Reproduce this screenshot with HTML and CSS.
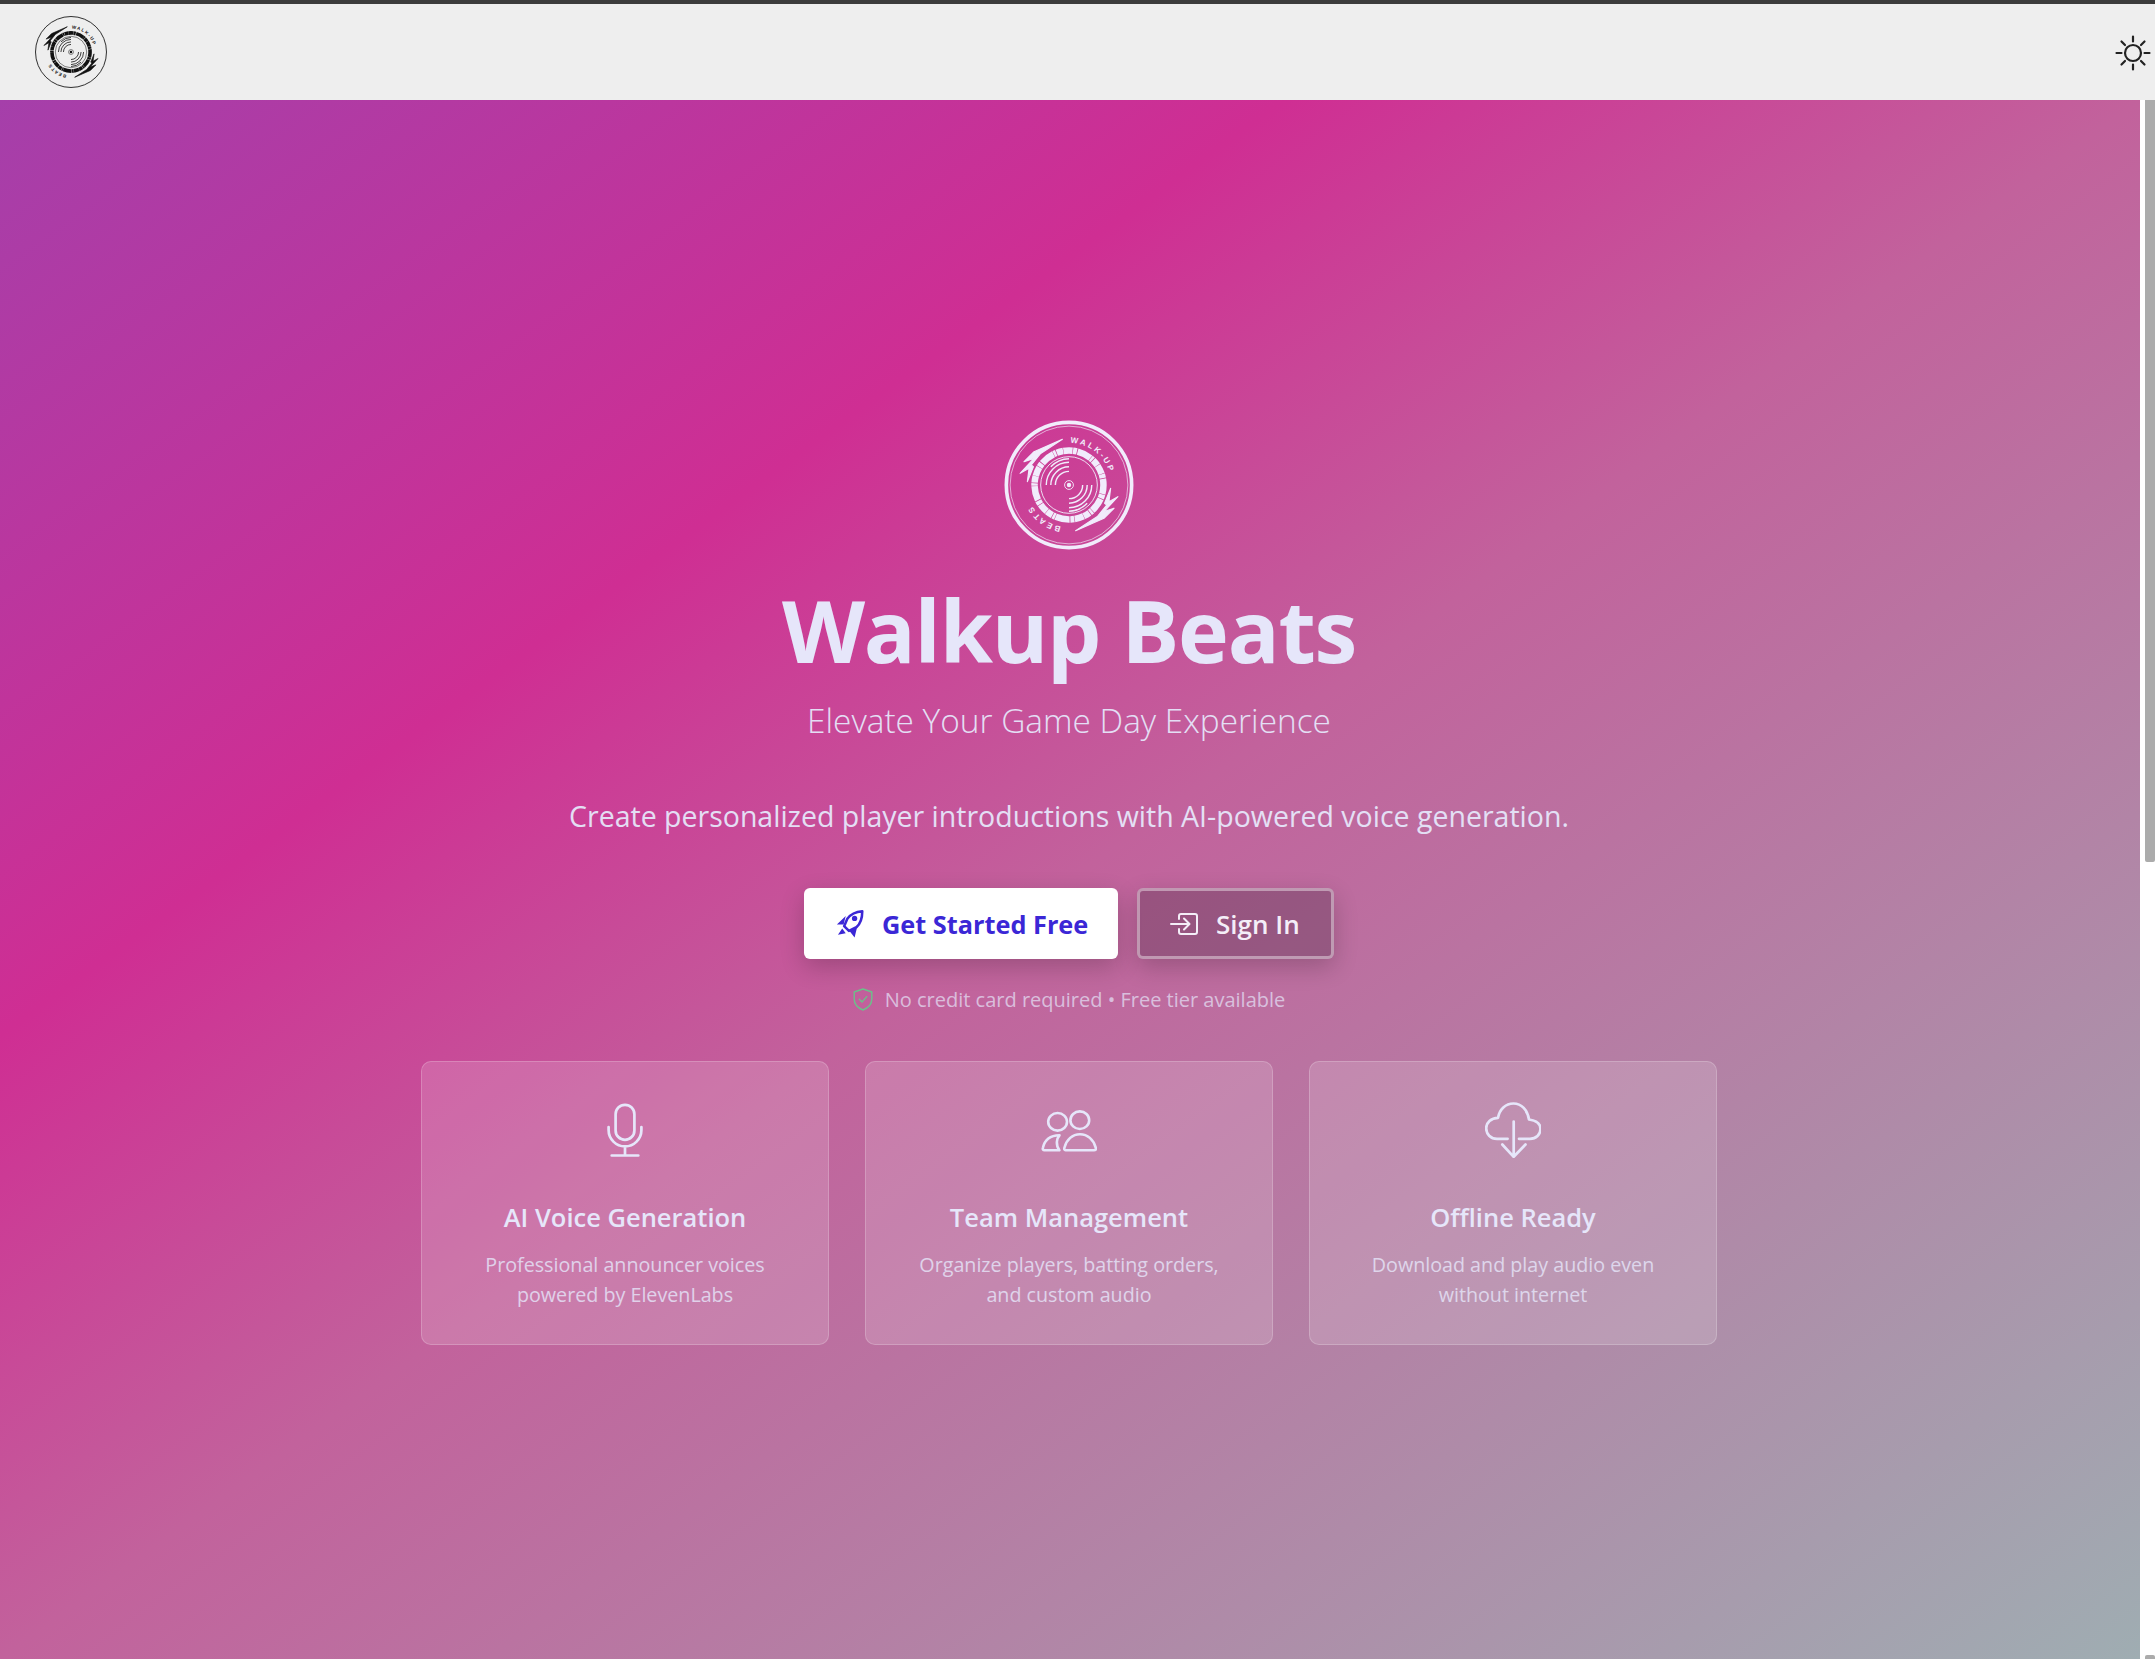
FILE: index.html
```html
<!DOCTYPE html>
<html>
<head>
  <title>Walkup Beats</title>
  <link rel="stylesheet" href="styles.css">
</head>
<body>
  <svg class="defs" width="0" height="0">
    <defs>
      <symbol id="logo-art" viewBox="0 0 100 100">
        <path id="logo-text-path" d="M50 17.5 A32.5 32.5 0 1 1 49.9 17.5" fill="none"/>
        <g fill="none" stroke="currentColor">
          <circle cx="50" cy="50" r="21.8" stroke-width="0.7"/>
          <circle cx="50" cy="50" r="26.5" stroke-width="5" stroke-dasharray="7 0.4 3 0.6 11 0.3 2 0.5 5 0.3"/>
          <circle cx="50" cy="50" r="3.4" stroke-width="0.7"/>
          <path d="M50 39.5 A10.5 10.5 0 0 0 39.5 50 M50 36 A14 14 0 0 0 36 50 M50 32.5 A17.5 17.5 0 0 0 32.5 50 M50 29.8 A20 20 0 0 0 36 36" stroke-width="1.1"/>
          <path d="M50 60.5 A10.5 10.5 0 0 0 60.5 50 M50 64 A14 14 0 0 0 64 50 M50 67.5 A17.5 17.5 0 0 0 67.5 50 M50 70.2 A20 20 0 0 0 64 64" stroke-width="1.1"/>
        </g>
        <circle cx="50" cy="50" r="1.7" fill="currentColor"/>
        <polygon class="logo-bolt" points="44.9,14.9 23.1,24.4 15.4,32.1 23.1,29.5 12.4,41 19.3,37.2 18,47.4 22.6,35.9 21,34.6 28.2,25.7"/>
        <polygon class="logo-bolt" transform="rotate(180 50 50)" points="44.9,14.9 23.1,24.4 15.4,32.1 23.1,29.5 12.4,41 19.3,37.2 18,47.4 22.6,35.9 21,34.6 28.2,25.7"/>
        <text class="logo-text" fill="currentColor" font-size="6.2"><textPath href="#logo-text-path" startOffset="0.5%">WALK-UP</textPath></text>
        <text class="logo-text" fill="currentColor" font-size="6.2"><textPath href="#logo-text-path" startOffset="53%">BEATS</textPath></text>
      </symbol>
    </defs>
  </svg>

  <div class="top-line"></div>
  <nav class="navbar">
    <a class="brand" href="#">
      <svg class="brand-logo" viewBox="0 0 100 100">
        <circle cx="50" cy="50" r="49.3" fill="none" stroke="currentColor" stroke-width="1.2"/>
        <use href="#logo-art"/>
      </svg>
    </a>
    <button class="theme-toggle" type="button" aria-label="Toggle theme">
      <svg viewBox="0 0 36 36" fill="none" stroke="currentColor" stroke-width="2.2" stroke-linecap="round">
        <circle cx="18" cy="18" r="8"/>
        <path d="M18 1.5V6.5M18 29.5V34.5M1.5 18H6.5M29.5 18H34.5M6.5 6.5L10 10M26 26L29.5 29.5M6.5 29.5L10 26M26 10L29.5 6.5"/>
      </svg>
    </button>
  </nav>

  <div class="page">
    <main class="hero">
      <svg class="hero-logo" viewBox="0 0 100 100">
        <circle cx="50" cy="50" r="48.2" fill="none" stroke="currentColor" stroke-width="2.8"/>
        <circle cx="50" cy="50" r="45.3" fill="none" stroke="currentColor" stroke-width="0.5"/>
        <use href="#logo-art"/>
      </svg>
      <h1>Walkup Beats</h1>
      <p class="subtitle">Elevate Your Game Day Experience</p>
      <p class="lead">Create personalized player introductions with AI-powered voice generation.</p>

      <div class="actions">
        <a class="btn btn-primary" href="#">
          <svg class="btn-icon" viewBox="0 0 30 30">
            <path fill="currentColor" d="M11 7.5L2.7 15.5H9ZM21.7 17.7L19.3 27.7L14.5 21.5ZM7.7 19.3L3.7 25L11 23.7Z"/>
            <path fill="#fff" stroke="currentColor" stroke-width="2.4" stroke-linejoin="round" d="M26.5 3C20 3.5 15.5 6 12.5 10L9.5 17L14 21.5L21 18C25 14.5 26.5 10 26.5 3Z"/>
            <circle cx="19.3" cy="9.8" r="2.5" fill="currentColor"/>
          </svg>
          Get Started Free
        </a>
        <a class="btn btn-outline" href="#">
          <svg class="btn-icon" viewBox="0 0 28 22" fill="none" stroke="currentColor" stroke-width="2" stroke-linecap="round" stroke-linejoin="round">
            <path d="M9 6V3C9 2 10 1 11 1H25C26 1 27 2 27 3V19C27 20 26 21 25 21H11C10 21 9 20 9 19V16"/>
            <path d="M1 11H19M14 5.5L19.5 11L14 16.5"/>
          </svg>
          Sign In
        </a>
      </div>

      <p class="note">
        <svg class="note-icon" viewBox="0 0 20 23" fill="none" stroke="currentColor" stroke-width="1.4" stroke-linecap="round" stroke-linejoin="round">
          <path d="M10 1L18.8 4V11C18.8 16 15 20 10 22C5 20 1.2 16 1.2 11V4Z"/>
          <path d="M6.3 11.3L9 14L13.8 8.6"/>
        </svg>
        No credit card required • Free tier available
      </p>

      <section class="features">
        <div class="feature">
          <svg class="feature-icon" viewBox="0 0 56 56" fill="none" stroke="currentColor" stroke-width="2.7" stroke-linecap="round">
            <rect x="18.6" y="2.8" width="18.8" height="35" rx="9.4"/>
            <path d="M11.6 25V28A16.4 16.4 0 0 0 44.4 28V25M28 44.5V53.5M14.7 53.5H41.3"/>
          </svg>
          <h3>AI Voice Generation</h3>
          <p>Professional announcer voices<br>powered by ElevenLabs</p>
        </div>
        <div class="feature">
          <svg class="feature-icon" viewBox="0 0 56 56" fill="none" stroke="currentColor" stroke-width="2.6" stroke-linejoin="round">
            <ellipse cx="16.6" cy="19.8" rx="9.4" ry="8.8"/>
            <ellipse cx="38.8" cy="18.2" rx="9.4" ry="8.8"/>
            <path d="M24.5 48.2H53C54.5 48.2 55.3 47.4 54.8 45.8C52.5 37.5 46.5 32.2 39 32.2C31.5 32.2 25.5 37.5 23.4 45.8C23 47.3 23.4 48.2 24.5 48.2Z"/>
            <path d="M18.4 48.2H3.5C2 48.2 1.4 47.3 1.9 45.8C3.5 38.5 8.5 33.6 18.5 33.3C15.5 36.5 14.5 43 18.4 48.2Z"/>
          </svg>
          <h3>Team Management</h3>
          <p>Organize players, batting orders,<br>and custom audio</p>
        </div>
        <div class="feature">
          <svg class="feature-icon" viewBox="0 0 56 56" fill="none" stroke="currentColor" stroke-width="2.7" stroke-linecap="round" stroke-linejoin="round">
            <path d="M22.6 36.8H12C5.5 36.8 1.2 32 1.2 26.3C1.2 20.5 6 16 13 15.8C14.5 7.5 20.5 1.5 28.5 1.5C36.5 1.5 42.5 8 44 17.5C51 18.5 55.5 22 55.5 27C55.5 32.5 51 36.8 45 36.8H34"/>
            <path d="M28.7 19.5V54.5M17.3 42.5L28.7 54.8L40.5 42.5"/>
          </svg>
          <h3>Offline Ready</h3>
          <p>Download and play audio even<br>without internet</p>
        </div>
      </section>
    </main>

    <div class="scroll-gutter">
      <div class="scroll-thumb"></div>
      <div class="scroll-thumb-end"></div>
    </div>
  </div>
</body>
</html>
```

FILE: styles.css
```css
* {
  box-sizing: border-box;
}
html, body {
  height: 100%;
}
body {
  margin: 0;
  display: flex;
  flex-direction: column;
  font-family: "Open Sans", "Noto Sans", sans-serif;
  background-color: #fff;
  overflow: hidden;
}
p, h1, h3 {
  margin: 0;
}
.defs {
  display: block;
  height: 0;
}
.logo-text {
  font-family: "Liberation Sans", sans-serif;
  font-weight: 700;
  letter-spacing: 1.7px;
}
.logo-bolt {
  fill: currentColor;
  stroke: currentColor;
  stroke-width: 0.9;
  stroke-linejoin: round;
}
.top-line {
  height: 4px;
  background-color: #3c3c3c;
}
.navbar {
  height: 96px;
  padding: 0 4px 0 35px;
  display: flex;
  align-items: center;
  justify-content: space-between;
  background-color: #eeeeee;
  color: #111;
}
.brand {
  display: block;
  color: #111;
}
.brand-logo {
  display: block;
  width: 72px;
  height: 72px;
}
.theme-toggle {
  width: 36px;
  height: 36px;
  margin-top: 2px;
  padding: 0;
  border: none;
  background: none;
  color: #222;
}
.theme-toggle svg {
  display: block;
}
.page {
  flex: 1;
  display: flex;
  min-height: 0;
}
.hero {
  flex: 1;
  padding: 6px 2px 0 0;
  display: flex;
  flex-direction: column;
  align-items: center;
  justify-content: center;
  background: linear-gradient(to bottom right, #a53faa 0%, #cf2e93 30%, #c2629c 50%, #9fadb2 100%);
  color: #e6e6fa;
}
.hero-logo {
  width: 130px;
  height: 130px;
  color: #f1ecfc;
}
.hero h1 {
  margin-top: 28px;
  font-size: 86px;
  line-height: 1.2;
  font-weight: 700;
  letter-spacing: -1.2px;
}
.subtitle {
  margin-top: 19px;
  font-size: 33.4px;
  line-height: 1.2;
  font-weight: 300;
  opacity: 0.95;
}
.lead {
  margin-top: 58px;
  font-size: 28.5px;
  line-height: 1.2;
  opacity: 0.95;
}
.actions {
  margin-top: 55px;
  display: flex;
  gap: 19px;
}
.btn {
  height: 71px;
  padding-top: 2px;
  display: flex;
  align-items: center;
  gap: 16px;
  border-radius: 6px;
  font-size: 25.3px;
  font-weight: 700;
  text-decoration: none;
  box-shadow: 0 8px 24px rgba(0, 0, 0, 0.2);
}
.btn-primary {
  width: 314px;
  padding-left: 30px;
  background-color: #fff;
  color: #3b27d6;
}
.btn-primary .btn-icon {
  width: 32px;
  height: 32px;
}
.btn-outline {
  width: 197px;
  padding-left: 30px;
  background-color: rgba(60, 40, 60, 0.3);
  border: 3px solid rgba(255, 255, 255, 0.4);
  color: #f4eef8;
  font-size: 26px;
  font-weight: 600;
}
.btn-outline .btn-icon {
  width: 28px;
  height: 22px;
  margin-right: 2px;
}
.note {
  margin-top: 27px;
  display: flex;
  align-items: center;
  gap: 12px;
  font-size: 20px;
  line-height: 28px;
  color: rgba(230, 230, 250, 0.7);
}
.note-icon {
  width: 20px;
  height: 23px;
  color: #6cc08a;
}
.features {
  margin-top: 47px;
  display: flex;
  gap: 36px;
}
.feature {
  width: 408px;
  height: 284px;
  padding-top: 40px;
  text-align: center;
  background-color: rgba(255, 255, 255, 0.15);
  border: 1px solid rgba(255, 255, 255, 0.2);
  border-radius: 10px;
}
.feature-icon {
  display: block;
  width: 56px;
  height: 56px;
  margin: 0 auto;
}
.feature h3 {
  margin-top: 42px;
  font-size: 25.5px;
  line-height: 34px;
  font-weight: 600;
}
.feature p {
  margin-top: 16px;
  font-size: 19.7px;
  line-height: 30px;
  opacity: 0.8;
}
.scroll-gutter {
  width: 15px;
  padding-left: 5px;
  display: flex;
  flex-direction: column;
  justify-content: space-between;
}
.scroll-thumb {
  height: 762px;
  background-color: #ababab;
  border-radius: 0 0 2px 2px;
}
.scroll-thumb-end {
  height: 4px;
  background-color: #ababab;
  border-radius: 2px 2px 0 0;
}
```
